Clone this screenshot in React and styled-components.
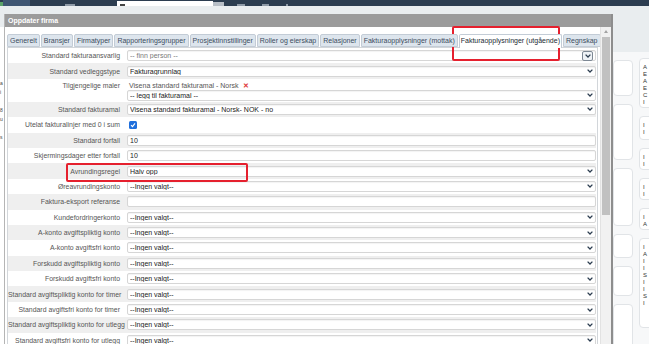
import React from "react";
import styled, { createGlobalStyle } from "styled-components";

const GlobalStyle = createGlobalStyle`
  html, body {
    margin: 0;
    padding: 0;
    background: #e9edef;
    font-family: "Liberation Sans", Arial, sans-serif;
  }
`;

const tabs = [
  "Generelt",
  "Bransjer",
  "Firmatyper",
  "Rapporteringsgrupper",
  "Prosjektinnstillinger",
  "Roller og eierskap",
  "Relasjoner",
  "Fakturaopplysninger (mottak)",
  "Fakturaopplysninger (utgående)",
  "Regnskap",
];

const NONE = "--Ingen valgt--";

const rows = [
  { label: "Standard fakturaansvarlig", kind: "person", value: "-- finn person --" },
  { label: "Standard vedleggstype", kind: "select", value: "Fakturagrunnlag" },
  { label: "Tilgjengelige maler", kind: "templates" },
  { label: "Standard fakturamal", kind: "select", value: "Visena standard fakturamal - Norsk- NOK - no" },
  { label: "Utelat fakturalinjer med 0 i sum", kind: "check" },
  { label: "Standard forfall", kind: "text", value: "10" },
  { label: "Skjermingsdager etter forfall", kind: "text", value: "10" },
  { label: "Avrundingsregel", kind: "select", value: "Halv opp" },
  { label: "Øreavrundingskonto", kind: "select", value: NONE },
  { label: "Faktura-eksport referanse", kind: "text", value: "" },
  { label: "Kundefordringerkonto", kind: "select", value: NONE },
  { label: "A-konto avgiftspliktig konto", kind: "select", value: NONE },
  { label: "A-konto avgiftsfri konto", kind: "select", value: NONE },
  { label: "Forskudd avgiftspliktig konto", kind: "select", value: NONE },
  { label: "Forskudd avgiftsfri konto", kind: "select", value: NONE },
  { label: "Standard avgiftspliktig konto for timer", kind: "select", value: NONE },
  { label: "Standard avgiftsfri konto for timer", kind: "select", value: NONE },
  { label: "Standard avgiftspliktig konto for utlegg", kind: "select", value: NONE },
  { label: "Standard avgiftsfri konto for utlegg", kind: "select", value: NONE },
];

const Page = styled.div`
  position: relative;
  width: 649px;
  height: 344px;
  overflow: hidden;
  display: flex;
  flex-direction: column;
`;

const TopBar = styled.div`
  height: 6px;
  flex-shrink: 0;
  background: #2c3d50;
  display: flex;
  align-items: flex-end;
`;

const NavBit = styled.div`
  width: ${(p) => p.$w}px;
  height: ${(p) => p.$h}px;
  margin-left: ${(p) => p.$ml}px;
  background: ${(p) => p.$bg};
`;

const SearchBox = styled.div`
  width: 96px;
  height: 5px;
  margin-left: 42px;
  background: #fff;
  display: flex;
  align-items: flex-end;
  padding-left: 3px;
  box-sizing: border-box;
`;

const Body = styled.div`
  flex: 1;
  display: flex;
  min-height: 0;
`;

const LeftStrip = styled.div`
  width: 4px;
  flex-shrink: 0;
  overflow: hidden;
  margin-top: 8px;
  display: flex;
  flex-direction: column;
  font-size: 5px;
  color: #444;
  line-height: 9px;
`;

const LeftTop = styled.div`
  height: 13px;
  background: #e9edef;
  flex-shrink: 0;
`;

const LeftBody = styled.div`
  flex: 1;
  background: #fff;
  padding-top: 52px;
`;

const Dialog = styled.div`
  width: 609px;
  flex-shrink: 0;
  margin-top: 8px;
  border-left: 1px solid #b5b5b5;
  border-right: 2px solid #8d8d8d;
  box-sizing: border-box;
  background: #fff;
  display: flex;
  flex-direction: column;
`;

const TitleBar = styled.div`
  height: 13px;
  flex-shrink: 0;
  background: #9b9b9b;
  color: #fff;
  font-size: 7px;
  font-weight: bold;
  line-height: 13px;
  padding-left: 3px;
`;

const DialogMain = styled.div`
  flex: 1;
  display: flex;
  min-height: 0;
`;

const Content = styled.div`
  flex: 1;
  padding: 7px 2px 0 2px;
  overflow: hidden;
`;

const TabRow = styled.div`
  display: flex;
  gap: 1px;
  height: 13px;
  align-items: flex-end;
  position: relative;
  z-index: 1;
`;

const Tab = styled.div`
  height: ${(p) => (p.$active ? 14 : 13)}px;
  box-sizing: border-box;
  padding: ${(p) => (p.$active ? "0 1px" : "0 2px")};
  font-size: 7px;
  line-height: 12px;
  white-space: nowrap;
  color: ${(p) => (p.$active ? "#222a33" : "#3c4c5e")};
  background: ${(p) => (p.$active ? "#fff" : "#dde5ed")};
  border: 1px solid #c3ccd6;
  border-bottom: ${(p) => (p.$active ? "none" : "1px solid #c3ccd6")};
  border-radius: 2px 2px 0 0;
  margin-bottom: ${(p) => (p.$active ? -1 : 0)}px;
`;

const Panel = styled.div`
  border: 1px solid #d2d6da;
  border-bottom: none;
  padding: 0 1px 0 0;
`;

const Row = styled.div`
  display: grid;
  grid-template-columns: 119px 1fr;
  align-items: ${(p) => (p.$top ? "start" : "center")};
  min-height: 15.4px;
  padding: ${(p) => (p.$top ? "2px 0 1px" : "0")};
  box-sizing: border-box;
  background: ${(p) => (p.$shade ? "#efefef" : "#fff")};
`;

const Label = styled.div`
  text-align: right;
  padding-right: 7px;
  font-size: 6.9px;
  line-height: 9px;
  color: #555;
  white-space: nowrap;
`;

const Field = styled.div`
  height: 11px;
  box-sizing: border-box;
  border: 1px solid #d6d6d6;
  border-radius: 2px;
  background: #fff;
  box-shadow: inset 0 1px 1px rgba(0, 0, 0, 0.05);
  display: flex;
  align-items: center;
  padding: 0 2px 0 2px;
  font-size: 7px;
  color: ${(p) => (p.$muted ? "#777" : "#222")};
  white-space: nowrap;
`;

const FieldText = styled.span`
  flex: 1;
  overflow: hidden;
`;

const ChevronBox = styled.div`
  width: 11px;
  height: 10px;
  margin-top: 1px;
  box-sizing: border-box;
  border: 1px solid #7d8894;
  border-radius: 2px;
  background: #eef2f6;
  display: flex;
  align-items: center;
  justify-content: center;
`;

const Stack = styled.div`
  display: flex;
  flex-direction: column;
`;

const TemplateLine = styled.div`
  height: 9px;
  line-height: 9px;
  font-size: 7px;
  color: #555;
  padding-left: 2px;
  display: flex;
  align-items: center;
  gap: 4px;
`;

const Remove = styled.span`
  color: #e03a3a;
  font-size: 7px;
  font-weight: bold;
`;

const Check = styled.div`
  width: 8px;
  height: 8px;
  margin-left: 2px;
  border-radius: 1.5px;
  background: #1f6fdc;
  display: flex;
  align-items: center;
  justify-content: center;
`;

const Scrollbar = styled.div`
  width: 11px;
  flex-shrink: 0;
  background: #f1f1f1;
  border-left: 1px solid #e2e2e2;
  box-sizing: border-box;
  display: flex;
  flex-direction: column;
  align-items: center;
`;

const ScrollArrow = styled.div`
  width: 0;
  height: 0;
  margin-top: 3px;
  border-left: 2.5px solid transparent;
  border-right: 2.5px solid transparent;
  border-bottom: 3px solid #a3a3a3;
`;

const Thumb = styled.div`
  width: 8px;
  height: 178px;
  margin-top: 4px;
  background: #c1c1c1;
`;

const Side = styled.div`
  flex: 1;
  display: flex;
  flex-direction: column;
  min-width: 0;
  overflow: hidden;
`;

const SideTop = styled.div`
  height: 46px;
  flex-shrink: 0;
`;

const SideCols = styled.div`
  flex: 1;
  background: #f7f8f9;
  display: flex;
  gap: 6px;
`;

const SideCol = styled.div`
  display: flex;
  flex-direction: column;
  gap: ${(p) => p.$gap}px;
  width: ${(p) => p.$w}px;
  flex-shrink: 0;
  padding-top: ${(p) => p.$pt}px;
`;

const Card = styled.div`
  height: ${(p) => p.$h}px;
  flex-shrink: 0;
  background: #fff;
  border: 1px solid #e1e4e7;
  border-radius: 4px;
  box-sizing: border-box;
  padding: 5px 0 0 3px;
  font-size: 6px;
  line-height: 7px;
  color: #333;
  overflow: hidden;
  white-space: nowrap;
`;

const Highlight = styled.div`
  position: absolute;
  left: ${(p) => p.$x}px;
  top: ${(p) => p.$y}px;
  width: ${(p) => p.$w}px;
  height: ${(p) => p.$h}px;
  border: 2px solid #e5202e;
  border-radius: 2px;
  box-sizing: border-box;
  pointer-events: none;
`;

const Chevron = ({ color = "#2c3d50" }) => (
  <svg width="6" height="4" viewBox="0 0 6 4">
    <path d="M0.6 0.6 L3 3 L5.4 0.6" fill="none" stroke={color} strokeWidth="1.3" />
  </svg>
);

const Tick = () => (
  <svg width="6" height="6" viewBox="0 0 6 6">
    <path d="M1 3.2 L2.5 4.6 L5 1.4" fill="none" stroke="#fff" strokeWidth="1.1" />
  </svg>
);

const renderField = (row) => {
  switch (row.kind) {
    case "person":
      return (
        <Field $muted>
          <FieldText>{row.value}</FieldText>
          <ChevronBox>
            <Chevron />
          </ChevronBox>
        </Field>
      );
    case "select":
      return (
        <Field>
          <FieldText>{row.value}</FieldText>
          <Chevron />
        </Field>
      );
    case "text":
      return (
        <Field>
          <FieldText>{row.value}</FieldText>
        </Field>
      );
    case "check":
      return (
        <Check>
          <Tick />
        </Check>
      );
    case "templates":
      return (
        <Stack>
          <TemplateLine>
            Visena standard fakturamal - Norsk <Remove>✕</Remove>
          </TemplateLine>
          <Field>
            <FieldText>-- legg til fakturamal --</FieldText>
            <Chevron />
          </Field>
        </Stack>
      );
    default:
      return null;
  }
};

const leftCards = [36, 56, 58, 24, 30, 60];

const rightCards = [
  { h: 50, text: ["A", "E", "A", "E", "C", "I"] },
  { h: 24, text: ["I", "I"] },
  { h: 22, text: ["I", "I"] },
  { h: 22, text: ["I", "I"] },
  { h: 22, text: ["I", "A"] },
  { h: 90, text: ["I", "A", "I", "I", "S", "I", "I", "S", "I"] },
];

export default function App() {
  return (
    <>
      <GlobalStyle />
      <Page>
        <TopBar>
          <NavBit $w={3} $h={4} $ml={0} $bg="#5aa36a" />
          <NavBit $w={27} $h={6} $ml={0} $bg="#3f5673" />
          <NavBit $w={10} $h={2} $ml={35} $bg="#8e9aa7" />
          <SearchBox>
            <NavBit $w={5} $h={2} $ml={0} $bg="#444" />
          </SearchBox>
          <NavBit $w={11} $h={4} $ml={0} $bg="#b7bec6" />
          <NavBit $w={8} $h={2} $ml={13} $bg="#8e9aa7" />
          <NavBit $w={7} $h={2} $ml={17} $bg="#8e9aa7" />
          <NavBit $w={2} $h={2} $ml={17} $bg="#8e9aa7" />
        </TopBar>
        <Body>
          <LeftStrip>
            <LeftTop />
            <LeftBody>
              <div>a</div>
              <div>i</div>
              <div>&nbsp;</div>
              <div>8</div>
              <div>u</div>
              <div>&nbsp;</div>
              <div>s</div>
            </LeftBody>
          </LeftStrip>
          <Dialog>
            <TitleBar>Oppdater firma</TitleBar>
            <DialogMain>
              <Content>
                <TabRow>
                  {tabs.map((t) => (
                    <Tab key={t} $active={t === "Fakturaopplysninger (utgående)"}>
                      {t}
                    </Tab>
                  ))}
                </TabRow>
                <Panel>
                  {rows.map((row, i) => (
                    <Row key={row.label} $shade={i % 2 === 1} $top={row.kind === "templates"}>
                      <Label>{row.label}</Label>
                      {renderField(row)}
                    </Row>
                  ))}
                </Panel>
              </Content>
              <Scrollbar>
                <ScrollArrow />
                <Thumb />
              </Scrollbar>
            </DialogMain>
          </Dialog>
          <Side>
            <SideTop />
            <SideCols>
              <SideCol $w={20} $gap={8} $pt={8}>
                {leftCards.map((h, i) => (
                  <Card key={i} $h={h} />
                ))}
              </SideCol>
              <SideCol $w={20} $gap={8} $pt={6}>
                {rightCards.map((c, i) => (
                  <Card key={i} $h={c.h}>
                    {c.text.map((l, j) => (
                      <div key={j}>{l}</div>
                    ))}
                  </Card>
                ))}
              </SideCol>
            </SideCols>
          </Side>
        </Body>
        <Highlight $x={452} $y={26} $w={108} $h={35} />
        <Highlight $x={66} $y={163} $w={182} $h={19} />
      </Page>
    </>
  );
}
